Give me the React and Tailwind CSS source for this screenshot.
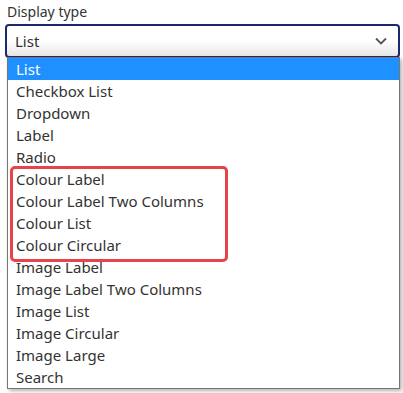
import React from 'react';

const options = [
    'List', 'Checkbox List', 'Dropdown', 'Label', 'Radio',
    'Colour Label', 'Colour Label Two Columns', 'Colour List', 'Colour Circular',
    'Image Label', 'Image Label Two Columns', 'Image List', 'Image Circular', 'Image Large', 'Search',
];

export default function App() {
    return (
        <div className="w-[403px] h-[393px] bg-white relative overflow-hidden text-[#333]" style={{ fontFamily: '"Noto Sans", sans-serif' }}>
            <div className="pl-[7px] pt-[2px] text-[14px] leading-[20px]">Display type</div>

            {/* Select */}
            <div className="relative mx-[5px] mt-[2px] w-[395px] h-[34px] rounded-[4px] border-2 border-[#1a2a6c] bg-gradient-to-b from-white via-white to-[#e6e6e6] flex items-center pl-[8px] pr-[11px]">
                <span className="text-[15px] flex-1">List</span>
                <svg width="12" height="8" viewBox="0 0 12 8" className="text-[#555]">
                    <path d="M1 1.5 L6 6.5 L11 1.5" fill="none" stroke="currentColor" strokeWidth="1.8" />
                </svg>
            </div>

            {/* Open list */}
            <div className="absolute left-[7px] top-[57px] w-[393px] bg-white border border-[#767676] shadow-[2px_2px_4px_rgba(0,0,0,0.3)]">
                {options.map((o, i) => (
                    <div
                        key={o}
                        className={`h-[22px] pl-[8px] text-[15px] leading-[22px] ${i === 0 ? 'bg-[#1e90ff] text-white' : ''}`}
                    >
                        {o}
                    </div>
                ))}
            </div>

            {/* Highlight box */}
            <div className="absolute left-[10px] top-[166px] w-[218px] h-[96px] rounded-[5px] border-[3px] border-[#e8434a]" />
        </div>
    );
}
